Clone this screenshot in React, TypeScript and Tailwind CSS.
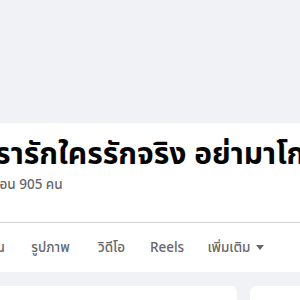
const tabs = [
  { label: "เพื่อน", width: "w-[60px]", extra: "-ml-[42px] justify-end pr-[13px]" },
  { label: "รูปภาพ", width: "w-[65px]", extra: "justify-center" },
  { label: "วิดีโอ", width: "w-[57px]", extra: "justify-center" },
  { label: "Reels", width: "w-[54px]", extra: "justify-center" },
];

const App = () => {
  return (
    <div
      className="flex h-[300px] w-[300px] flex-col overflow-hidden bg-[#f0f2f5]"
      style={{ fontFamily: '"Noto Sans", "Noto Sans Thai", sans-serif' }}
    >
      {/* cover area */}
      <div className="h-[123px] shrink-0 bg-[#f0f2f5]"></div>

      {/* profile header */}
      <div className="shrink-0 bg-white">
        <div className="h-[99px] overflow-hidden pt-[10px]">
          <h1 className="-ml-[15px] whitespace-nowrap text-[30px] font-bold leading-[40px] text-[#050505]">
            เรารักใครรักจริง อย่ามาโกหก
          </h1>
          <p className="-ml-[14px] mt-[1px] whitespace-nowrap text-[13.5px] font-medium leading-[20px] text-[#65676b]">
            เพื่อน 905 คน
          </p>
        </div>
        <hr className="h-px border-0 bg-[#ced0d4]" />
        <nav className="flex h-[49px] items-center whitespace-nowrap text-[13.5px] font-medium text-[#65676b]">
          {tabs.map((tab) => (
            <span
              key={tab.label}
              className={`flex shrink-0 ${tab.width} ${tab.extra}`}
            >
              {tab.label}
            </span>
          ))}
          <span className="flex w-[84px] shrink-0 items-center justify-center gap-[6px]">
            เพิ่มเติม
            <svg width="8" height="5" viewBox="0 0 8 5" fill="#65676b">
              <path d="M0 0h8L4 5z" />
            </svg>
          </span>
        </nav>
      </div>

      {/* content cards */}
      <div className="flex gap-[13px] pt-[14px]">
        <div className="-ml-[10px] h-[80px] w-[247px] shrink-0 rounded-[6px] bg-white"></div>
        <div className="h-[80px] w-[80px] shrink-0 rounded-[6px] bg-white px-[12px] pt-[9px]">
          <span className="text-[16px] font-bold text-[#050505]">แนะนำตัว</span>
        </div>
      </div>
    </div>
  );
};

export default App;
